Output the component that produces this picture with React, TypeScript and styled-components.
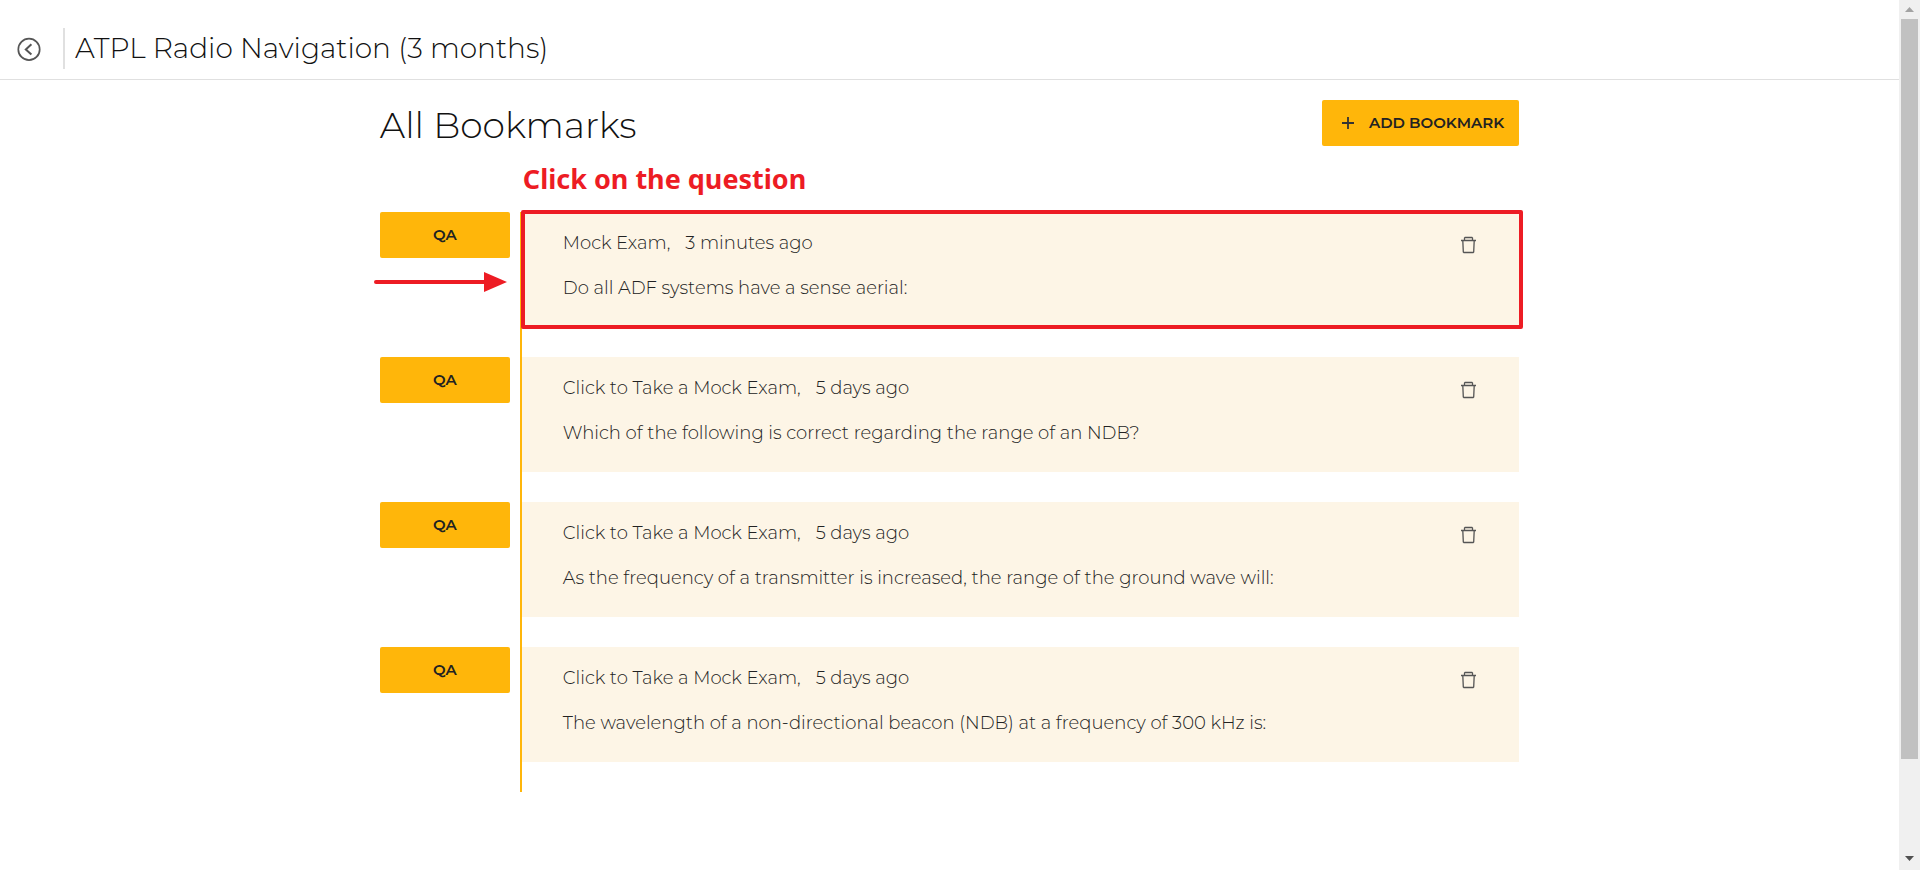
import React from "react";
import styled, { createGlobalStyle } from "styled-components";

const amber = "#ffb60a";
const red = "#ed1c24";
const ink = "#111";

const GlobalStyle = createGlobalStyle`
  *, *::before, *::after { box-sizing: border-box; }
  body {
    margin: 0;
    background: #fff;
    color: ${ink};
    font-family: Montserrat, Inter, "Liberation Sans", sans-serif;
    font-weight: 300;
  }
  h1, h2, p, ul { margin: 0; padding: 0; font-weight: 300; }
  button { font: inherit; color: inherit; border: 0; cursor: pointer; }
`;

const Window = styled.div`
  display: flex;
  min-height: 100vh;
`;

const Page = styled.div`
  flex: 1;
  min-width: 0;
`;

const Header = styled.header`
  display: flex;
  align-items: center;
  height: 80px;
  padding: 18px 16px 0;
  border-bottom: 1px solid #e0e0e0;
`;

const BackButton = styled.button`
  display: flex;
  padding: 0;
  background: none;
`;

const CourseTitle = styled.h1`
  margin-left: 21px;
  padding-left: 10px;
  border-left: 2px solid #e0e0e0;
  font-size: 28px;
  line-height: 41px;
`;

const Content = styled.main`
  width: 60%;
  margin: 0 auto;
  padding-top: 20px;
`;

const TitleBar = styled.div`
  display: flex;
  justify-content: space-between;
  align-items: flex-start;
  height: 112px;
`;

const PageTitle = styled.h2`
  font-size: 36px;
  line-height: 50px;
`;

const AddButton = styled.button`
  display: flex;
  align-items: center;
  gap: 14px;
  height: 46px;
  padding: 0 15px 1px 19px;
  border-radius: 2px;
  background: ${amber};
  && { color: #222; font-size: 15px; font-weight: 600; }
`;

const List = styled.ul`
  list-style: none;
`;

const Row = styled.li`
  position: relative;
  display: flex;
  gap: 10px;
`;

const TypeButton = styled.button`
  width: 130px;
  height: 46px;
  padding: 0 0 2px;
  border-radius: 2px;
  background: ${amber};
  && { color: #222; font-size: 15px; font-weight: 600; }
`;

const Track = styled.div`
  flex: 1;
  padding-bottom: 30px;
  border-left: 2px solid ${amber};
`;

const Card = styled.article`
  display: flex;
  justify-content: space-between;
  align-items: flex-start;
  min-height: 115px;
  padding: 21px 42px 20px 41px;
  background: #fdf5e6;
  color: #222;
  font-size: 18px;
  line-height: 20px;
`;

const Meta = styled.p`
  display: flex;
  gap: 15px;
  margin-bottom: 25px;
`;

const QuestionLink = styled.a`
  color: inherit;
  text-decoration: none;
`;

const DeleteButton = styled.button`
  display: flex;
  margin-top: 3px;
  padding: 0;
  background: none;
`;

const Outline = styled.div`
  position: absolute;
  inset: -2px -4px 28px 141px;
  border: 4px solid ${red};
  border-radius: 2px;
  pointer-events: none;
`;

const Arrow = styled.svg`
  position: absolute;
  left: -6px;
  top: 60px;
`;

const Hint = styled.p`
  position: absolute;
  left: 143px;
  bottom: 100%;
  padding-bottom: 16px;
  color: ${red};
  font: bold 27px/34px Tahoma, "Noto Sans", sans-serif;
  white-space: nowrap;
`;

const ScrollBar = styled.div`
  display: flex;
  flex-direction: column;
  align-items: center;
  width: 21px;
  margin-bottom: 7px;
  padding: 7px 0 9px;
  background: #f0f0f0;
`;

const Thumb = styled.div`
  flex: 740;
  width: 17px;
  margin-top: 7px;
  background: #c1c1c1;
`;

const Rest = styled.div`
  flex: 97;
`;

const bookmarks = [
  { source: "Mock Exam,", age: "3 minutes ago", question: "Do all ADF systems have a sense aerial:" },
  { source: "Click to Take a Mock Exam,", age: "5 days ago", question: "Which of the following is correct regarding the range of an NDB?" },
  { source: "Click to Take a Mock Exam,", age: "5 days ago", question: "As the frequency of a transmitter is increased, the range of the ground wave will:" },
  { source: "Click to Take a Mock Exam,", age: "5 days ago", question: "The wavelength of a non-directional beacon (NDB) at a frequency of 300 kHz is:" },
];

const BackIcon = () => (
  <svg width="26" height="26" viewBox="0 0 26 26" fill="none" stroke="#555" strokeWidth="1.7">
    <circle cx="13" cy="13.4" r="10.7" />
    <path d="M15.4 8.2 9.8 13.4l5.6 5.2" strokeWidth="2" />
  </svg>
);

const PlusIcon = () => (
  <svg width="14" height="14" viewBox="0 0 14 14" fill="none" stroke="#333" strokeWidth="1.8">
    <path d="M7 1v12M1 7h12" />
  </svg>
);

const TrashIcon = () => (
  <svg width="17" height="18" viewBox="0 0 17 18" fill="none" stroke="#555" strokeWidth="1.3">
    <path d="M1 4.5h15M4.5 4.4V2.1l.6-.6h6.8l.6.6v2.3M2.8 4.6l.5 11.3.6.6h9.2l.6-.6.5-11.3" />
  </svg>
);

export default function App() {
  return (
    <>
      <GlobalStyle />
      <Window>
        <Page>
          <Header>
            <BackButton aria-label="Back"><BackIcon /></BackButton>
            <CourseTitle>ATPL Radio Navigation (3 months)</CourseTitle>
          </Header>
          <Content>
            <TitleBar>
              <PageTitle>All Bookmarks</PageTitle>
              <AddButton><PlusIcon />ADD BOOKMARK</AddButton>
            </TitleBar>
            <List>
              {bookmarks.map((b, i) => (
                <Row key={b.question}>
                  <TypeButton>QA</TypeButton>
                  <Track>
                    <Card>
                      <div>
                        <Meta><span>{b.source}</span><span>{b.age}</span></Meta>
                        <QuestionLink href="#question">{b.question}</QuestionLink>
                      </div>
                      <DeleteButton aria-label="Delete bookmark"><TrashIcon /></DeleteButton>
                    </Card>
                  </Track>
                  {i === 0 && (
                    <>
                      <Hint>Click on the question</Hint>
                      <Outline />
                      <Arrow width="134" height="20" viewBox="0 0 134 20" aria-hidden="true">
                        <path d="M2 10h110" stroke={red} strokeWidth="4" strokeLinecap="round" />
                        <path d="M110 0l23 10-23 10z" fill={red} />
                      </Arrow>
                    </>
                  )}
                </Row>
              ))}
            </List>
          </Content>
        </Page>
        <ScrollBar aria-hidden="true">
          <svg width="9" height="5" viewBox="0 0 9 5"><path d="M0 5 4.5 0 9 5z" fill="#a3a3a3" /></svg>
          <Thumb />
          <Rest />
          <svg width="9" height="5" viewBox="0 0 9 5"><path d="M0 0h9L4.5 5z" fill="#505050" /></svg>
        </ScrollBar>
      </Window>
    </>
  );
}
